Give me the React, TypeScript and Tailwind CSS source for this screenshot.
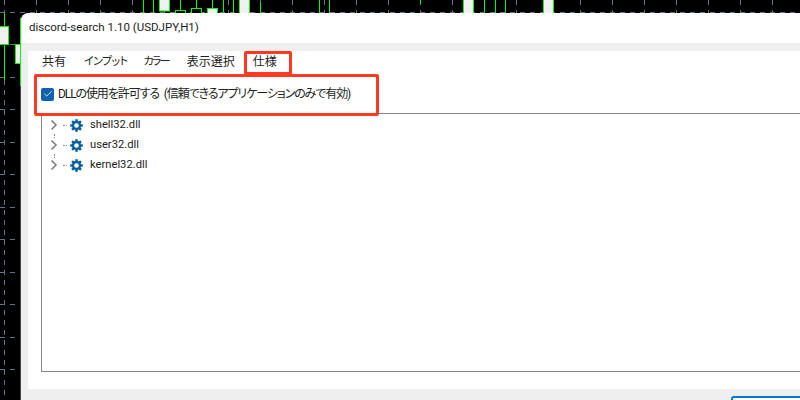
import React from 'react';
import { Check } from 'lucide-react';

const fontStack = "font-['Roboto','Noto_Sans_CJK_JP',sans-serif] [font-feature-settings:'palt']";

const gridX = Array.from({ length: 25 }, (_, i) => 4 + i * 32);
const gridY = [12, 44, 77, 109, 142, 174, 207, 239, 272, 304, 337, 369];

// x, top, bottom of the bare wicks
const wicks = [
  [4.5, 13, 80], [143.5, 0, 13], [153.5, 0, 13], [180.5, 0, 10], [196.5, 0, 8],
  [212.5, 0, 8], [223.5, 0, 13], [233.5, 0, 13], [260.5, 2, 13], [319.5, 0, 13], [329.5, 0, 13],
  [420.5, 0, 4], [484.5, 0, 13], [495.5, 0, 13], [505.5, 0, 13],
];

// x, y, w, h, fill of the candle bodies
const bodies = [
  [-1.5, 26.5, 10, 18, '#f0f0f0'], [15.5, 44.5, 6, 19, '#f0f0f0'], [159.5, -2, 10, 13, '#f0f0f0'],
  [175.5, 10.5, 10, 4, '#000'], [191.5, 8.5, 10, 6, '#000'], [207.5, 8.5, 10, 6, '#f0f0f0'],
  [239.5, -2, 10, 16, '#f0f0f0'], [463.5, -2, 10, 16, '#f0f0f0'], [543.5, -2, 10, 16, '#f0f0f0'],
];

const ChartBackground = () => (
  <svg className="absolute inset-0" width="800" height="400">
    {gridX.map((x) => (
      <line key={x} x1={x + 0.5} y1="0" x2={x + 0.5} y2="400" stroke="#64748b" strokeDasharray="5 5" />
    ))}
    {gridY.map((y) => (
      <line key={y} x1="0" y1={y + 0.5} x2="800" y2={y + 0.5} stroke="#64748b" strokeDasharray="5 5" />
    ))}
    {wicks.map(([x, y1, y2]) => (
      <line key={x} x1={x} y1={y1} x2={x} y2={y2} stroke="#00ff00" />
    ))}
    {bodies.map(([x, y, w, h, fill]) => (
      <rect key={x as number} x={x} y={y} width={w} height={h} fill={fill as string} stroke="#00ff00" />
    ))}
  </svg>
);

const GearIcon = () => (
  <svg width="13" height="13" viewBox="0 0 14 14" className="shrink-0">
    <g stroke="#0a5f9e" strokeWidth="2.6">
      <line x1="7" y1="0.2" x2="7" y2="13.8" />
      <line x1="0.2" y1="7" x2="13.8" y2="7" />
      <line x1="2.2" y1="2.2" x2="11.8" y2="11.8" />
      <line x1="11.8" y1="2.2" x2="2.2" y2="11.8" />
    </g>
    <circle cx="7" cy="7" r="5" fill="#0a5f9e" />
    <circle cx="7" cy="7" r="2.5" fill="#fff" />
  </svg>
);

const Chevron = () => (
  <svg width="8" height="12" viewBox="0 0 8 12" className="shrink-0">
    <polyline points="1.5,1.5 6,6 1.5,10.5" fill="none" stroke="#808080" strokeWidth="1.6" />
  </svg>
);

const tabs = [
  { label: '共有', cls: 'mr-[18px]' },
  { label: 'インプット', cls: 'mr-[16px] text-[11px] tracking-[-0.6px]' },
  { label: 'カラー', cls: 'mr-[18px] text-[11px] tracking-[-1.7px]' },
  { label: '表示選択', cls: 'mr-[18px]' },
  { label: '仕様', cls: '' },
];
const dlls = ['shell32.dll', 'user32.dll', 'kernel32.dll'];

const TreeRow = ({ name, last }: { name: string; last: boolean }) => (
  <div className="relative flex h-5 items-center pl-[8px]">
    <Chevron />
    <span className="ml-[5px] mr-[3px] w-[4px] border-t border-dotted border-[#8a8a8a]" />
    <GearIcon />
    <span className="ml-[7px] pt-[1px] text-[11.2px] text-[#222]">{name}</span>
    {!last && <span className="absolute left-[12px] top-[19px] h-[4px] border-l border-dotted border-[#8a8a8a]" />}
  </div>
);

export default function App() {
  return (
    <div className={`relative h-[400px] w-[800px] overflow-hidden bg-black ${fontStack}`}>
      <ChartBackground />

      {/* dialog */}
      <div className="absolute left-[21px] top-[13px] flex h-[400px] w-[790px] flex-col rounded-tl-[8px] bg-[#efefef] shadow-[-1px_0_0_#4a4a4a]">
        <div className="flex h-[30px] shrink-0 items-center rounded-tl-[8px] bg-white pl-[8px] text-[11.5px] text-[#1c1c1c]">
          discord-search 1.10 (USDJPY,H1)
        </div>
        <div className="ml-[7px] mt-[8px] h-[338px] shrink-0 bg-white">
          <div className="flex h-[22px] items-end pl-[14px] text-[12px] text-[#222]">
            {tabs.map((tab) => (
              <div key={tab.label} className={`relative h-[20px] leading-[18px] ${tab.cls}`}>
                {tab.label}
                {tab.label === '仕様' && <span className="absolute bottom-[-1px] left-[-1px] h-[2px] w-[24px] bg-[#0067c0]" />}
              </div>
            ))}
          </div>
          <label className="ml-[13px] mt-[14px] flex h-[14px] items-center gap-[4px] text-[12px] tracking-[-1.1px] text-[#222] [word-spacing:3px]">
            <span className="flex h-[13px] w-[13px] items-center justify-center rounded-[2px] bg-[#0f62ae]">
              <Check className="h-[10px] w-[10px] text-white" strokeWidth={2} />
            </span>
            <span>DLLの使用を許可する (信頼できるアプリケーションのみで有効)</span>
          </label>
          <div className="ml-[13px] mt-[12px] h-[259px] border-l border-t border-b border-[#858585] pt-[1px]">
            {dlls.map((d, i) => (
              <TreeRow key={d} name={d} last={i === dlls.length - 1} />
            ))}
          </div>
        </div>
        <div className="flex pt-[7px]">
          <div className="ml-[710px] h-[30px] w-[120px] shrink-0 rounded-[3px] border-2 border-[#0078d4] bg-white" />
        </div>
      </div>

      {/* wick that sits on the dialog's edge */}
      <div className="absolute left-[20px] top-[18px] h-[68px] w-px bg-[#00ff00]" />

      {/* red annotation boxes */}
      <div className="absolute left-[244px] top-[51px] h-[24px] w-[48px] rounded-[2px] border-[3px] border-[#ff3a20]" />
      <div className="absolute left-[34px] top-[74px] h-[42px] w-[345px] rounded-[2px] border-[3px] border-[#ff3a20]" />
    </div>
  );
}
